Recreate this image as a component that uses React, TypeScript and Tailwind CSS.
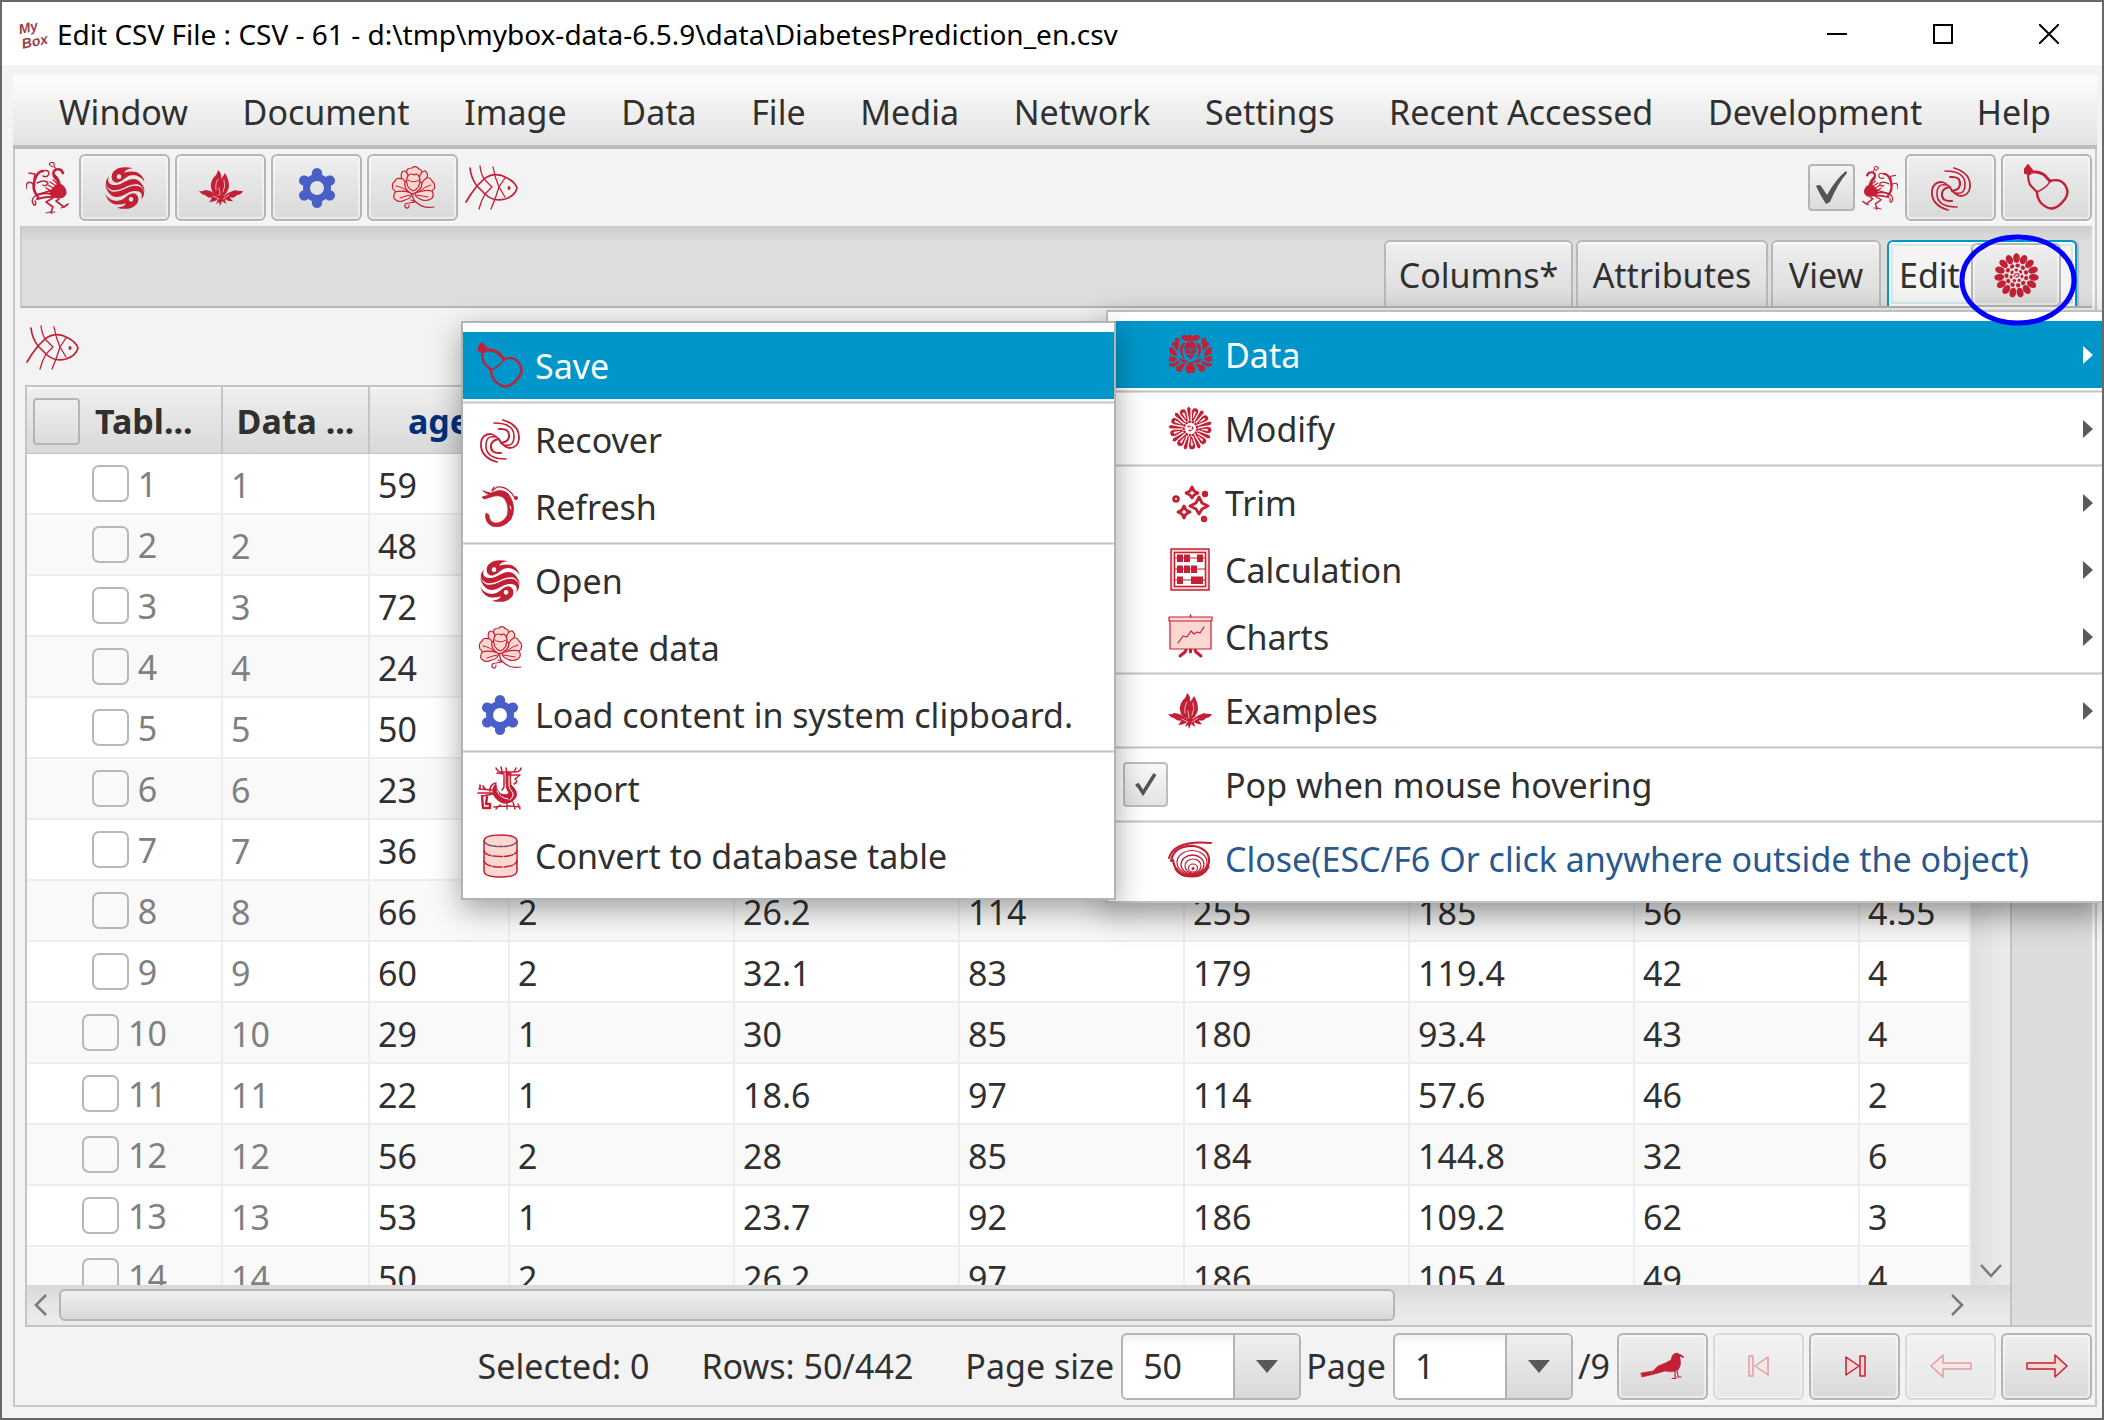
import React from "react";

const RED = "#c31f35";
const PINK = "#fbd7d1";

type IconProps = { className?: string };

function Art({
  w,
  h,
  className = "",
  children,
}: {
  w: number;
  h: number;
  className?: string;
  children: React.ReactNode;
}) {
  return (
    <svg
      width={w}
      height={h}
      viewBox={`0 0 ${w} ${h}`}
      className={`shrink-0 overflow-visible ${className}`}
      fill="none"
      stroke={RED}
      strokeWidth="1.5"
      strokeLinecap="round"
      strokeLinejoin="round"
      aria-hidden="true"
    >
      {children}
    </svg>
  );
}

function ring(n: number, offset = 0) {
  return Array.from({ length: n }, (_, i) => (360 / n) * i + offset);
}

function FishIcon({ className }: IconProps) {
  return (
    <Art w={53} h={44} className={className}>
      <path d="M1 36 6 28 12 20 19 13Q30 5 42 12 50 16 52 22 50 30 40 33 28 36 20 28L12 20Q6 12 5 2" strokeWidth="1.700" />
      <path d="M15 0Q16 8 19 13L27 21 20 28Q16 35 14 43" strokeWidth="1.300" />
      <path d="M28 1Q30 12 34 21L40 31M40 12 34 21 30 33 26 43" strokeWidth="1.300" />
      <ellipse cx="44" cy="22" rx="1.500" ry="2" fill={RED} stroke="none" />
    </Art>
  );
}

function PhoenixIcon({ flip = false, w = 43, h = 52 }: { flip?: boolean; w?: number; h?: number }) {
  return (
    <svg
      width={w}
      height={h}
      viewBox="0 0 43 52"
      className={flip ? "shrink-0 -scale-x-100" : "shrink-0"}
      fill="none"
      stroke={RED}
      strokeWidth="1.2"
      strokeLinecap="round"
      strokeLinejoin="round"
      aria-hidden="true"
    >
      <path d="M27 5Q22 3 24 1 29-1 28 4L30 7" strokeWidth="1.200" />
      <path d="M37 11 35 8Q31 6 28 9 26 13 31 18" strokeWidth="2.600" />
      <path d="M29 13Q34 18 34 22 40 25 40 31 39 36 33 36 27 35 24 32 26 26 31 23 32 19 29 13Z" fill={RED} />
      <path d="M32 34Q22 29 10 33M33 35Q22 34 11 37" strokeWidth="2" />
      <path d="M12 35Q5 27 9 17 12 9 17 9" strokeWidth="2.600" />
      <path d="M17 9Q23 7 23 12 21 16 17 14M8 17 9 12 3 11M9 23Q0 16 0 27M11 21Q19 17 22 21 20 25 17 23M9 34Q4 38 8 43 11 43 9 39" strokeWidth="1.400" />
      <path d="M22 23 31 28M20 26 29 31M24 20 32 25M14 32 29 27M27 18 32 22" strokeWidth="1.400" />
      <path d="M27 36 20 40 27 45 25 50M33 37 30 39 38 45 42 42" strokeWidth="1.600" />
      <path d="M25 50 20 51M25 50 29 50M38 45 35 46M25 50 26 52" strokeWidth="1.200" />
    </svg>
  );
}

function WaveIcon({ className }: IconProps) {
  const half = (
    <>
      <path
        d="M84 4Q60-3 40 4 18 14 20 32 22 46 36 47 48 46 60 34 76 20 96 26 112 32 119 46 114 24 96 16 80 10 58 17 60 6 84 4ZM42 22a7 7 0 1 1 0 14 7 7 0 0 1 0-14Z"
        fill={RED}
        fillRule="evenodd"
        stroke="none"
      />
      <path
        d="M12 27Q2 56 34 54 48 52 62 43 90 28 106 46 118 58 119 76 112 56 98 52 84 50 66 58 36 74 18 68-2 58 4 40Z"
        fill={RED}
        stroke="none"
      />
    </>
  );
  return (
    <svg width="42" height="42" viewBox="0 0 120 126" className={`shrink-0 ${className ?? ""}`} aria-hidden="true">
      {half}
      <g transform="rotate(180 60 63)">{half}</g>
    </svg>
  );
}

function LotusIcon() {
  return (
    <Art w={44} h={36}>
      <path d="M19 0Q23 3 22 9 25 5 26 3 30 9 30 17 28 24 24 26 17 27 13 21 10 13 15 7 18 5 19 0Z" fill={RED} stroke="none" />
      <path d="M19 26Q12 20 6 20 4 22 0 21 3 25 6 25 10 29 13 27 12 31 10 32 16 32 19 29L17 34 20 32 21 36 23 31 27 34 26 29Q30 32 34 31 31 29 31 27 35 29 38 25 42 25 44 21 38 21 36 20 30 22 25 26Z" fill={RED} stroke="none" />
      <path d="M17 20Q16 13 19 9M24 22Q27 16 25 10M21 25 20 18M14 26 20 29M30 25 24 29" stroke="#efd6d8" strokeWidth=".8" />
    </Art>
  );
}

function GearFlowerIcon() {
  return (
    <svg width="40" height="42" viewBox="-20 -21 40 42" className="shrink-0" aria-hidden="true">
      <g fill="#4a5ec8">
        {ring(6, 90).map((a) => (
          <circle key={a} r="5.200" cx="14.800" cy="0" transform={`rotate(${a})`} />
        ))}
        <path fillRule="evenodd" d="M0-14a14 14 0 1 1 0 28 14 14 0 0 1 0-28ZM0-7a7 7 0 1 0 0 14A7 7 0 0 0 0-7Z" />
      </g>
    </svg>
  );
}

function PeonyIcon() {
  return (
    <Art w={44} h={43}>
      <g fill={PINK} strokeWidth="1.200">
        <path d="M16 8Q14 2 21 2 24-1 28 3 33 4 29 12H18Z" />
        <path d="M17 9Q14 3 11 6 9 10 12 17L18 18ZM29 9Q33 2 36 7 38 10 33 18L27 17Z" />
        <path d="M12 13Q5 11 4 15 0 18 2 23 6 29 20 28L16 18ZM33 14Q38 9 41 15 45 18 43 23 40 28 25 28L30 18Z" />
        <path d="M4 26Q1 33 5 34 8 37 14 34 20 33 21 27 12 24 4 26ZM41 25Q44 30 40 33 34 36 29 33 24 31 24 27 34 23 41 25Z" />
        <path d="M14 16Q12 23 21 28 31 25 31 17 26 13 22 15 18 12 14 16Z" />
        <path d="M16 12Q18 6 23 9 27 6 29 13 29 23 22 25 14 21 16 12Z" />
      </g>
      <path d="M17 14Q22 18 28 14M5 20Q12 21 17 26M40 19Q34 20 28 26M9 32Q14 30 19 29M37 31Q32 30 25 29" strokeWidth="1" />
      <path d="M22 28Q21 33 25 36 32 43 43 41M20 34 24 36 18 37Q13 37 14 41 18 44 18 39" strokeWidth="1.200" />
    </Art>
  );
}

function SwirlIcon() {
  const arm = (
    <>
      <path d="M24 1Q41 6 40 20 39 29 30 29 24 27 21 22" strokeWidth="1.800" />
      <path d="M15 4Q35 4 35 17 35 28 26 26" strokeWidth="1.600" />
      <path d="M20 10Q31 9 30 18 29 23 22 24" strokeWidth="2" />
    </>
  );
  return (
    <Art w={42} h={42}>
      {arm}
      <g transform="rotate(180 21 22)">{arm}</g>
    </Art>
  );
}

function GourdIcon() {
  return (
    <Art w={45} h={45}>
      <path d="M4 0 6 3 8 5 6 9 1 8 1 4Z" fill={RED} strokeWidth="2" />
      <path d="M4 7Q4 18 7 21L13 27" strokeWidth="2.200" />
      <path d="M6 7 12 7Q20 8 23 13L26 16" strokeWidth="3" />
      <path d="M26 16Q36 13 41 20 46 27 41 34 35 42 30 43 24 45 17 38 13 33 13 27" strokeWidth="2.400" />
      <path d="M13 27Q24 22 26 16" strokeWidth="1.500" />
    </Art>
  );
}

function RefreshDragonIcon() {
  return (
    <Art w={36} h={41}>
      <path d="M9 7Q20 2 27 9 35 21 29 33 21 43 10 40 2 36 4 27L7 29Q7 35 12 37 20 38 25 30 28 20 22 12 17 8 9 11L2 13 0 11 7 9 1 5Z" fill={RED} strokeWidth=".8" />
      <path d="M10 5 15 1Q26 0 33 12M15 5Q22 4 26 8M10 4 12 1" strokeWidth="1.200" />
      <circle cx="34" cy="12" r="2" fill={RED} stroke="none" />
      <path d="M28 20 29 23" stroke="#fff" strokeWidth="1" />
    </Art>
  );
}

function ExportDragonIcon() {
  return (
    <Art w={44} h={43}>
      <path d="M33 6Q32 12 33 18 40 24 38 30 34 37 25 36 17 33 15 26 14 20 18 17 18 24 23 27 29 29 31 26 28 22 28 16V6Z" fill={RED} strokeWidth="1" />
      <path d="M26 8V20L24 23M18 1Q20 6 26 5H38Q43 4 43 1M24 4 23 0M29 5 28 1M36 5 38 1M19 6 26 7M32 8H42L37 12Q41 15 36 17" strokeWidth="1.500" />
      <path d="M12 24Q12 17 18 16M1 22 14 23M0 26H14M2 22V18M4 29 15 27M7 22 5 19" strokeWidth="1.700" />
      <path d="M4 29 5 41H12V37H8L9 30" strokeWidth="2.400" />
      <path d="M16 40Q30 38 42 40M29 36V42M35 35 37 42M18 42 22 38M40 37 42 42" strokeWidth="1.400" />
      <path d="M31 9V19Q32 23 35 26 36 30 32 33M19 24Q22 31 30 32" stroke="#fff" strokeWidth="1" />
    </Art>
  );
}

function DatabaseIcon() {
  return (
    <Art w={35} h={44}>
      <path d="M1 7V37Q1 43 17.500 43 34 43 34 37V7Q34 1 17.500 1 1 1 1 7Z" fill={PINK} />
      <path d="M1 7Q3 12.500 17.500 12.500 32 12.500 34 7" stroke="#7c4a63" strokeDasharray="4 1.500" />
      <path d="M1 17Q3 22.500 17.500 22.500 32 22.500 34 17M1 27Q3 33 17.500 33 32 33 34 27" strokeDasharray="9 2" />
    </Art>
  );
}

function ChrysanthemumIcon() {
  return (
    <svg width="45" height="45" viewBox="-22 -22 44 44" className="shrink-0" fill={RED} aria-hidden="true">
      {ring(15, 6).map((a) => (
        <ellipse key={a} cx="17" cy="0" rx="4.800" ry="3.300" transform={`rotate(${a})`} />
      ))}
      {ring(11, 15).map((a) => (
        <ellipse key={a} cx="9.800" cy="0" rx="2" ry="2.200" transform={`rotate(${a})`} />
      ))}
      {ring(7, 10).map((a) => (
        <ellipse key={a} cx="5.400" cy="0" rx="1.500" ry="1.700" transform={`rotate(${a})`} />
      ))}
      <path d="M-2.500 1Q-1-3 2-1.500 3 1.500-1 1.500" fill="none" stroke={RED} strokeWidth="1.200" />
    </svg>
  );
}

function PeonySolidIcon() {
  const side = (
    <>
      <path d="M3-19Q8-22 10-17 7-13 2-14ZM11-16Q17-19 16-12 19-14 19-10L13-3 12-9ZM14-1Q17-8 22-8 20-5 22-4 21 1 14 2ZM13 4 22 1 21 4 23 6 18 8ZM12 6 17 9 22 9Q22 14 16 12L11 9ZM8 9 15 13 14 17 10 18Q8 14 5 10Z" />
      <path d="M5-12Q11-12 11-4 10 2 5 6 9-1 8-6Z" />
      <path d="M3 7Q8 4 12 4 9 9 3 9Z" />
    </>
  );
  return (
    <svg width="45" height="41" viewBox="-23 -20.500 46 41" className="shrink-0" fill={RED} aria-hidden="true">
      {side}
      <g transform="scale(-1 1)">{side}</g>
      <path d="M-3-19Q0-22 3-18L2-14H-3Z" />
      <path d="M-4-12Q0-15 4-12L6-8Q7-1 0 5-7-1-6-8Z" />
      <path d="M-2 8H2L5 14Q5 20 0 19-5 20-5 14Z" />
      <path d="M-5-5Q-2-8 0-5 2-8 5-5M-3-1Q0 2 3-1M0-5V-2" stroke="#0096c9" strokeWidth="1" fill="none" />
    </svg>
  );
}

function DaisyIcon() {
  return (
    <svg width="45" height="45" viewBox="-22.500 -22.500 45 45" className="shrink-0" aria-hidden="true">
      {ring(18, 5).map((a, i) => (
        <g key={a} transform={`rotate(${a})`}>
          <path
            d={i % 2 ? "M8-.6 20-1.800 22 0 20 1.800 8 .6Z" : "M8-.8 17-3.200 20-2.600 21 0 20 2.600 17 3.200 8 .8Z"}
            fill={RED}
          />
          {i % 2 === 0 && <path d="M11 0 17-.8 17 .8Z" fill="#fff" stroke="#fff" strokeWidth=".6" />}
        </g>
      ))}
      <circle r="6.800" fill="none" stroke={RED} strokeWidth="2.400" strokeDasharray="2.500 .8" />
      <path d="M-3-2H0M2-2V1M-2 2H1" stroke={RED} strokeWidth="1.500" />
    </svg>
  );
}

function StarsIcon() {
  return (
    <Art w={45} h={40}>
      <g fill="#fff" strokeWidth="2.800">
        <path d="M24 4 26 8 30 10 26 12 24 15 22 12 18 10 22 8Z" />
        <path d="M31 14 34 20 40 23 34 26 31 31 28 26 22 23 28 20Z" />
        <path d="M16 23 18 27 22 29 18 31 16 35 14 31 10 29 14 27Z" />
        <circle cx="8" cy="16" r="2.400" />
        <circle cx="36" cy="36" r="1.800" />
      </g>
      <circle cx="37" cy="11" r="3.200" fill={RED} stroke="none" />
    </Art>
  );
}

function AbacusIcon() {
  const rows = [
    { y: 10, xs: [7, 14, 27] },
    { y: 21, xs: [7, 14, 21] },
    { y: 32, xs: [7, 21, 27] },
  ];
  return (
    <Art w={40} h={43}>
      <rect x="1" y="1" width="38" height="41" fill={PINK} strokeWidth="1.500" />
      <rect x="4.500" y="4.500" width="31" height="34" fill="#fff" strokeWidth="1.500" />
      {rows.map((r) => (
        <g key={r.y}>
          <path d={`M5 ${r.y}H35`} strokeWidth="1" />
          {r.xs.map((x) => (
            <rect key={x} x={x} y={r.y - 3.5} width="6" height="7.500" fill={RED} stroke="none" />
          ))}
        </g>
      ))}
    </Art>
  );
}

function EaselIcon() {
  return (
    <Art w={45} h={43}>
      <path d="M18 35 17 37 12 41M27 35 28 37 33 41M22.500 34V37" strokeWidth="3" />
      <rect x="2" y="4" width="41" height="30" fill={PINK} strokeWidth="1.200" />
      <rect x="1" y="2" width="43" height="4" fill={PINK} strokeWidth="1.200" />
      <path d="M22.500 0V2" />
      <path d="M10 28 15 21 19 22 23 16 26 19 29 17 32 18 36 12" strokeWidth="1.200" />
    </Art>
  );
}

function SpiralIcon() {
  return (
    <Art w={44} h={38}>
      <path d="M1 18Q6 0 43 3" strokeWidth="2" />
      <path d="M3 21Q6 5 26 6 42 9 41 22 38 36 23 36 7 35 5 20" strokeWidth="2.200" />
      <ellipse cx="24" cy="22.500" rx="15" ry="12" strokeWidth="1.200" />
      <ellipse cx="24.500" cy="24.500" rx="11.500" ry="9.500" strokeWidth="1.300" />
      <ellipse cx="25" cy="26" rx="8" ry="7" strokeWidth="1.200" />
      <ellipse cx="25" cy="28" rx="4.500" ry="4" strokeWidth="1.200" />
      <circle cx="25" cy="28.500" r="1.500" fill={RED} stroke="none" />
      <path d="M8 29Q13 37 25 36 35 36 40 27" strokeWidth="3" />
    </Art>
  );
}

function BirdIcon() {
  return (
    <Art w={43} h={26}>
      <path d="M0 20 12 18 17 13Q25 10 30 7 31 0 36 0 40 1 39 5 41 12 37 17 32 20 24 18L14 21 1 24Z" fill={RED} strokeWidth=".5" />
      <path d="M39 2 42 4" strokeWidth="1.800" />
      <path d="M34 18V25M36 18 37 23M31 25.500H35M36 24H40" strokeWidth="1.200" />
    </Art>
  );
}

function FirstIcon() {
  return (
    <Art w={22} h={22}>
      <path d="M1 1H5V21H1ZM20 2V20L7 11Z" fill={PINK} />
    </Art>
  );
}
function LastIcon() {
  return (
    <Art w={22} h={22}>
      <path d="M21 1H16V21H21ZM2 2V20L15 11Z" fill={PINK} />
    </Art>
  );
}
function PrevIcon() {
  return (
    <Art w={42} h={26}>
      <path d="M41 10H13V2L1 13 13 24V16H41Z" fill={PINK} />
    </Art>
  );
}
function NextIcon() {
  return (
    <Art w={42} h={26}>
      <path d="M1 10H29V2L41 13 29 24V16H1Z" fill={PINK} />
    </Art>
  );
}

const buttonFace =
  "flex items-center justify-center rounded-[6px] border-2 border-[#b5b5b5] bg-linear-to-b from-[#efefef] to-[#d9d9d9] shadow-[inset_0_0_0_2px_rgba(255,255,255,0.45),0_2px_0_#fafafa]";

function ToolButton({
  label,
  disabled,
  children,
}: {
  label: string;
  disabled?: boolean;
  children: React.ReactNode;
}) {
  return (
    <button
      type="button"
      aria-label={label}
      disabled={disabled}
      className={`${buttonFace} h-[67px] w-[91px] shrink-0 disabled:opacity-40`}
    >
      {children}
    </button>
  );
}

function TitleBar() {
  return (
    <header className="flex h-[63px] shrink-0 items-center bg-white pl-[18px]">
      <span className="flex w-[30px] -rotate-12 flex-col font-['Liberation_Sans'] text-[14px] leading-[15px] font-bold text-[#984048] italic">
        <span>My</span>
        <span>Box</span>
      </span>
      <h1 className="ml-[7px] text-[28px] text-black">
        Edit CSV File : CSV - 61 - d:\tmp\mybox-data-6.5.9\data\DiabetesPrediction_en.csv
      </h1>
      <div className="ml-auto flex h-full">
        <button type="button" aria-label="Minimize" className="flex w-[106px] items-center justify-center">
          <svg width="20" height="20" stroke="#000" strokeWidth="2">
            <path d="M0 10H20" />
          </svg>
        </button>
        <button type="button" aria-label="Maximize" className="flex w-[106px] items-center justify-center">
          <svg width="20" height="20" fill="none" stroke="#000" strokeWidth="2">
            <path d="M1 1H19V19H1Z" />
          </svg>
        </button>
        <button type="button" aria-label="Close" className="flex w-[106px] items-center justify-center">
          <svg width="20" height="20" stroke="#000" strokeWidth="2">
            <path d="M0 0 20 20M20 0 0 20" />
          </svg>
        </button>
      </div>
    </header>
  );
}

const menus = [
  "Window",
  "Document",
  "Image",
  "Data",
  "File",
  "Media",
  "Network",
  "Settings",
  "Recent Accessed",
  "Development",
  "Help",
];

function MenuBar() {
  return (
    <nav className="flex h-[74px] shrink-0 items-center justify-between border-b-4 border-[#bdbdbd] bg-linear-to-b from-[#fdfdfd] to-[#e3e3e3] px-[46px] pt-1">
      {menus.map((m) => (
        <button key={m} type="button" className="whitespace-nowrap">
          {m}
        </button>
      ))}
    </nav>
  );
}

function Toolbar() {
  return (
    <div className="flex h-[77px] shrink-0 items-center pl-[11px] pr-[3px]">
      <PhoenixIcon />
      <div className="ml-[10px] flex gap-[5px]">
        <ToolButton label="Open">
          <WaveIcon />
        </ToolButton>
        <ToolButton label="Examples">
          <LotusIcon />
        </ToolButton>
        <ToolButton label="Load content in system clipboard">
          <GearFlowerIcon />
        </ToolButton>
        <ToolButton label="Create data">
          <PeonyIcon />
        </ToolButton>
      </div>
      <FishIcon className="ml-[7px]" />
      <div className="ml-auto flex items-center gap-[5px]">
        <label className="mr-[2px] flex items-center gap-[7px]">
          <span className="relative flex">
            <input
              type="checkbox"
              defaultChecked
              aria-label="Keep on top"
              className="size-[47px] appearance-none rounded-[4px] border-2 border-[#b5b5b5] bg-linear-to-b from-[#f3f3f3] to-[#dcdcdc]"
            />
            <svg width="31" height="33" viewBox="0 0 31 33" className="pointer-events-none absolute top-[7px] left-2" fill="#545454">
              <path d="M0 15Q3 13 5 15L11 24Q20 8 30 0L31 2Q22 12 14 31L10 33Q4 24 0 15Z" />
            </svg>
          </span>
          <PhoenixIcon flip w={36} h={44} />
        </label>
        <ToolButton label="Recover">
          <SwirlIcon />
        </ToolButton>
        <ToolButton label="Save">
          <GourdIcon />
        </ToolButton>
      </div>
    </div>
  );
}

const tabFace =
  "h-full rounded-t-[6px] border-2 border-b-0 border-[#b8b8b8] bg-linear-to-b from-[#efefef] to-[#dadada] pt-[2px] shadow-[inset_0_2px_0_#fafafa]";

function TabStrip() {
  return (
    <div
      role="tablist"
      className="mr-[3px] ml-[5px] flex h-[82px] shrink-0 items-end justify-end gap-[3px] border-b-2 border-l-2 border-b-[#b5b5b5] border-l-[#cbcbcb] bg-linear-to-b from-[#cdcdcd] via-[#dddddd] via-20% to-[#dddddd] pt-[14px] pr-[15px]"
    >
      <button type="button" role="tab" className={`${tabFace} w-[189px]`}>
        Columns*
      </button>
      <button type="button" role="tab" className={`${tabFace} w-[192px]`}>
        Attributes
      </button>
      <button type="button" role="tab" className={`${tabFace} w-[110px]`}>
        View
      </button>
      <div className="relative ml-[3px] flex h-full w-[190px] items-center rounded-t-[6px] border-2 border-b-0 border-[#0096c9] bg-[#f4f4f4] pt-[2px] pl-[10px] shadow-[inset_0_0_0_2px_#fff,inset_0_0_0_4px_#d3e9f2,2px_0_0_#b8b8b8]">
        <button type="button" role="tab" aria-selected="true">
          Edit
        </button>
        <button type="button" aria-label="Data functions" className={`${buttonFace} absolute right-[14px] h-[64px] w-[90px]`}>
          <ChrysanthemumIcon />
        </button>
        <svg width="122" height="96" viewBox="0 0 122 96" className="pointer-events-none absolute -top-[10px] -right-[4px] z-30" fill="none" aria-hidden="true">
          <ellipse cx="61" cy="48" rx="56" ry="43" stroke="#0000ff" strokeWidth="5" />
        </svg>
      </div>
    </div>
  );
}

const rows: string[][] = [
  ["59", "2", "32.1", "101", "157", "93.2", "38", "4"],
  ["48", "1", "21.6", "87", "183", "103.2", "70", "3"],
  ["72", "2", "30.5", "93", "156", "93.6", "41", "4"],
  ["24", "1", "25.3", "84", "198", "131.4", "40", "5"],
  ["50", "1", "23", "101", "192", "125.4", "52", "4"],
  ["23", "1", "22.6", "89", "139", "64.8", "61", "2"],
  ["36", "2", "22", "90", "160", "99.6", "50", "3"],
  ["66", "2", "26.2", "114", "255", "185", "56", "4.55"],
  ["60", "2", "32.1", "83", "179", "119.4", "42", "4"],
  ["29", "1", "30", "85", "180", "93.4", "43", "4"],
  ["22", "1", "18.6", "97", "114", "57.6", "46", "2"],
  ["56", "2", "28", "85", "184", "144.8", "32", "6"],
  ["53", "1", "23.7", "92", "186", "109.2", "62", "3"],
  ["50", "2", "26.2", "97", "186", "105.4", "49", "4"],
];

const headCell =
  "border-r-2 border-b border-[#c4c4c4] bg-linear-to-b from-[#efefef] to-[#d9d9d9] pt-[2px] font-bold shadow-[inset_0_2px_0_#f8f8f8]";

function DataTable() {
  return (
    <table className="w-full table-fixed border-separate border-spacing-0">
      <colgroup>
        <col className="w-[196px]" />
        <col className="w-[147px]" />
        <col className="w-[140px]" />
        <col className="w-[225px]" />
        <col className="w-[225px]" />
        <col className="w-[225px]" />
        <col className="w-[225px]" />
        <col className="w-[225px]" />
        <col className="w-[225px]" />
        <col />
      </colgroup>
      <thead>
        <tr className="h-[67px]">
          <th className={headCell}>
            <div className="flex items-center gap-[15px] pl-[6px]">
              <input
                type="checkbox"
                aria-label="Select all rows"
                className="size-[47px] appearance-none rounded-[4px] border-2 border-[#b5b5b5] bg-linear-to-b from-[#efefef] to-[#dcdcdc]"
              />
              Tabl...
            </div>
          </th>
          <th className={headCell}>Data ...</th>
          <th className={`${headCell} text-[#00307a]`}>age</th>
          {["", "", "", "", "", "", ""].map((_, i) => (
            <th key={i} className={headCell} />
          ))}
        </tr>
      </thead>
      <tbody>
        {rows.map((r, i) => (
          <tr key={i} className="h-[61px] odd:bg-white even:bg-[#f9f9f9]">
            <td className="border-r-2 border-b-2 border-[#ededed] text-[#808080]">
              <label className="flex items-center justify-center gap-[9px] pl-px">
                <input type="checkbox" className="size-[37px] appearance-none rounded-[7px] border-2 border-[#b8b8b8]" />
                {i + 1}
              </label>
            </td>
            <td className="border-r-2 border-b-2 border-[#ededed] pt-[2px] pl-2 text-[#808080]">{i + 1}</td>
            {r.map((c, j) => (
              <td key={j} className="border-r-2 border-b-2 border-[#ededed] pt-[2px] pl-2">
                {c}
              </td>
            ))}
          </tr>
        ))}
      </tbody>
    </table>
  );
}

function TableArea() {
  return (
    <section className="mr-[3px] ml-[10px] flex min-h-0 flex-1 border-2 border-r-0 border-[#c4c4c4] bg-[#dcdcdc]">
      <div className="flex min-w-0 flex-1 flex-col">
        <div className="flex min-h-0 flex-1">
          <div className="min-w-0 flex-1 overflow-hidden bg-white">
            <DataTable />
          </div>
          <div className="flex w-[39px] flex-col items-center justify-end bg-linear-to-r from-[#dedede] to-[#ededed] pb-[7px]">
            <svg width="22" height="14" fill="none" stroke="#7a7a7a" strokeWidth="2.500" aria-hidden="true">
              <path d="M1 1 11 12 21 1" />
            </svg>
          </div>
        </div>
        <div className="flex h-[40px] shrink-0 items-center bg-linear-to-b from-[#d8d8d8] via-[#e6e6e6] to-[#ebebeb] pr-[46px] pl-[7px]">
          <svg width="13" height="22" fill="none" stroke="#7a7a7a" strokeWidth="2.500" aria-hidden="true">
            <path d="M12 1 2 11 12 21" />
          </svg>
          <div className="ml-[12px] flex flex-1">
            <div className="h-[32px] w-12/17 rounded-[6px] border-2 border-[#b5b5b5] bg-linear-to-b from-[#f0f0f0] to-[#d9d9d9]" />
          </div>
          <svg width="13" height="22" fill="none" stroke="#7a7a7a" strokeWidth="2.500" aria-hidden="true">
            <path d="M1 1 11 11 1 21" />
          </svg>
        </div>
      </div>
      <div className="w-[82px] shrink-0 border-l-2 border-[#c4c4c4]" />
    </section>
  );
}

function Combo({ label, options }: { label: string; options: string[] }) {
  return (
    <span className="relative flex h-[67px] w-[180px]">
      <select
        aria-label={label}
        className="w-full appearance-none rounded-[6px] border-2 border-[#b5b5b5] bg-linear-to-b from-[#f3f3f3] via-white via-20% to-white pl-[20px]"
      >
        {options.map((o) => (
          <option key={o}>{o}</option>
        ))}
      </select>
      <span className="pointer-events-none absolute inset-y-0.5 right-0.5 flex w-[66px] items-center justify-center rounded-r-[4px] border-l-2 border-[#b5b5b5] bg-linear-to-b from-[#efefef] to-[#d9d9d9]">
        <svg width="22" height="13" fill="#585858" aria-hidden="true">
          <path d="M0 0H22L11 13Z" />
        </svg>
      </span>
    </span>
  );
}

function StatusBar() {
  return (
    <footer className="flex h-[78px] shrink-0 items-center justify-end pr-[3px] whitespace-nowrap">
      <span className="mr-[52px]">Selected: 0</span>
      <span className="mr-[52px]">Rows: 50/442</span>
      <span className="mr-[7px]">Page size</span>
      <Combo label="Page size" options={["50", "100", "200"]} />
      <span className="mr-[7px] ml-[5px]">Page</span>
      <Combo label="Page" options={["1", "2", "3", "4", "5", "6", "7", "8", "9"]} />
      <span className="mr-[7px] ml-[5px]">/9</span>
      <div className="flex gap-[5px]">
        <ToolButton label="Go">
          <BirdIcon />
        </ToolButton>
        <ToolButton label="First page" disabled>
          <FirstIcon />
        </ToolButton>
        <ToolButton label="Last page">
          <LastIcon />
        </ToolButton>
        <ToolButton label="Previous page" disabled>
          <PrevIcon />
        </ToolButton>
        <ToolButton label="Next page">
          <NextIcon />
        </ToolButton>
      </div>
    </footer>
  );
}

function Separator() {
  return <div role="separator" className="my-[2px] h-[3px] border-y border-[#e0e0e0] bg-[#c4c4c4]" />;
}

function MenuEntry({
  icon,
  label,
  active,
  arrow,
  wide,
  tone = "",
}: {
  icon: React.ReactNode;
  label: string;
  active?: boolean;
  arrow?: boolean;
  wide?: boolean;
  tone?: string;
}) {
  return (
    <button
      type="button"
      role="menuitem"
      className={`flex h-[67px] w-full items-center text-left whitespace-nowrap ${wide ? "pl-[53px]" : "pl-[14px]"} ${
        active ? "bg-[#0096c9] text-white" : tone
      }`}
    >
      <span className="flex w-[46px] shrink-0 justify-center">{icon}</span>
      <span className="ml-[12px]">{label}</span>
      {arrow && (
        <svg width="10" height="18" className="mr-[11px] ml-auto" fill={active ? "#fff" : "#5a5a5a"} aria-hidden="true">
          <path d="M0 0 10 9 0 18Z" />
        </svg>
      )}
    </button>
  );
}

function PopupMenus() {
  return (
    <div
      role="menu"
      className="absolute top-[308px] -right-[2px] z-10 w-[998px] border-2 border-r-0 border-[#bfbfbf] bg-white py-[9px] pl-[6px] shadow-[0_12px_28px_rgba(0,0,0,0.4)]"
    >
      <MenuEntry wide active arrow icon={<PeonySolidIcon />} label="Data" />
      <Separator />
      <MenuEntry wide arrow icon={<DaisyIcon />} label="Modify" />
      <Separator />
      <MenuEntry wide arrow icon={<StarsIcon />} label="Trim" />
      <MenuEntry wide arrow icon={<AbacusIcon />} label="Calculation" />
      <MenuEntry wide arrow icon={<EaselIcon />} label="Charts" />
      <Separator />
      <MenuEntry wide arrow icon={<LotusIcon />} label="Examples" />
      <Separator />
      <label className="flex h-[67px] items-center pl-[9px]">
        <span className="relative flex">
          <input
            type="checkbox"
            defaultChecked
            className="size-[45px] appearance-none rounded-[4px] border-2 border-[#bdbdbd] bg-linear-to-b from-[#f8f8f8] to-[#e4e4e4]"
          />
          <svg width="22" height="24" viewBox="0 0 22 24" className="pointer-events-none absolute top-[11px] left-[12px]" fill="none" stroke="#545454" strokeWidth="3.500" aria-hidden="true">
            <path d="M1 13 3 12 8 20 20 1" />
          </svg>
        </span>
        <span className="ml-[57px]">Pop when mouse hovering</span>
      </label>
      <Separator />
      <MenuEntry wide icon={<SpiralIcon />} label="Close(ESC/F6 Or click anywhere outside the object)" tone="text-[#29588f]" />

      <div
        role="menu"
        className="absolute top-[9px] right-[988px] w-[655px] border-2 border-[#b3b3b3] bg-white py-[9px] shadow-[0_10px_28px_rgba(0,0,0,0.35)]"
      >
        <MenuEntry active icon={<GourdIcon />} label="Save" />
        <Separator />
        <MenuEntry icon={<SwirlIcon />} label="Recover" />
        <MenuEntry icon={<RefreshDragonIcon />} label="Refresh" />
        <Separator />
        <MenuEntry icon={<WaveIcon />} label="Open" />
        <MenuEntry icon={<PeonyIcon />} label="Create data" />
        <MenuEntry icon={<GearFlowerIcon />} label="Load content in system clipboard." />
        <Separator />
        <MenuEntry icon={<ExportDragonIcon />} label="Export" />
        <MenuEntry icon={<DatabaseIcon />} label="Convert to database table" />
      </div>
    </div>
  );
}

export default function App() {
  return (
    <div className="relative flex h-screen w-full flex-col overflow-hidden border-2 border-[#6b6869] bg-[#f3f3f3] font-['Noto_Sans',sans-serif] text-[34px] leading-[46px] text-[#303030]">
      <TitleBar />
      <div className="mx-[5px] mt-[10px] mb-[11px] ml-[11px] flex min-h-0 flex-1 flex-col">
        <MenuBar />
        <main className="flex min-h-0 flex-1 flex-col border-2 border-t-0 border-[#c8c8c8]">
          <Toolbar />
          <TabStrip />
          <div className="flex h-[77px] shrink-0 items-center pt-[2px] pl-[11px]">
            <FishIcon />
          </div>
          <TableArea />
          <StatusBar />
        </main>
      </div>
      <PopupMenus />
    </div>
  );
}
